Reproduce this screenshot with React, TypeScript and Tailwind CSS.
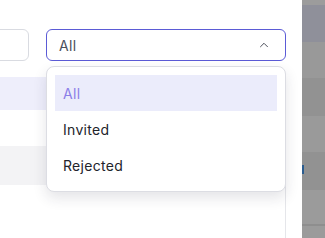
import { ChevronUp } from 'lucide-react'

const options = ['All', 'Invited', 'Rejected']

export default function App() {
  const selected = 'All'

  return (
    <div className="relative flex h-[238px] w-[325px] overflow-hidden bg-white font-['Inter',sans-serif] tracking-[0.3px]">
      {/* Main area */}
      <div className="relative w-[302px] shrink-0">
        {/* Toolbar */}
        <div className="mt-[29px] flex h-8 gap-[17px]">
          <div className="ml-[-31px] h-8 w-[60px] rounded-md border border-[#d9dbe1] bg-white" />
          <button className="flex h-8 w-[240px] items-center justify-between rounded-md border border-[#5b5bd6] bg-white pl-[12px] pr-[14px] text-[14px] text-[#4b4f5c]">
            <span>{selected}</span>
            <ChevronUp className="h-[14px] w-[14px] text-[#3f4350]" strokeWidth={1.6} />
          </button>
        </div>

        {/* Table rows behind */}
        <div className="mt-[16px] w-[286px] border-r border-[#e5e6ea]">
          <div className="h-[33px] bg-[#eeeefb]" />
          <div className="h-[36px] bg-white" />
          <div className="h-[39px] bg-[#f3f3f5]" />
          <div className="h-[60px] bg-white" />
        </div>

        {/* Dropdown menu */}
        <div className="absolute left-[46px] top-[66px] w-[240px] rounded-lg border border-[#dcdde3] bg-white p-2 shadow-[0_6px_14px_rgba(30,35,60,0.12)]">
          {options.map((o) => (
            <div
              key={o}
              className={`flex h-9 items-center px-2 text-[14px] ${o === selected ? 'bg-[#ebecfb] text-[#8b7ee8]' : 'text-[#22242b]'}`}
            >
              {o}
            </div>
          ))}
        </div>
      </div>

      {/* Dimmed side panel */}
      <div className="relative flex-1 bg-[#9b9b9b]">
        <div className="h-[5px] bg-[#9c9c9c]" />
        <div className="h-[37px] bg-[#8f909a]" />
        <div className="h-[36px] bg-[#999999]" />
        <div className="h-[38px] bg-[#929292]" />
        <div className="h-[36px] bg-[#9a9a9a]" />
        <div className="h-[38px] bg-[#929292]" />
        <div className="h-[36px] border-b-2 border-[#8e8e8e] bg-[#9b9b9b]" />
        <div className="absolute left-0 top-[165px] h-[9px] w-[2px] bg-[#2a5c8f]" />
      </div>
    </div>
  )
}
